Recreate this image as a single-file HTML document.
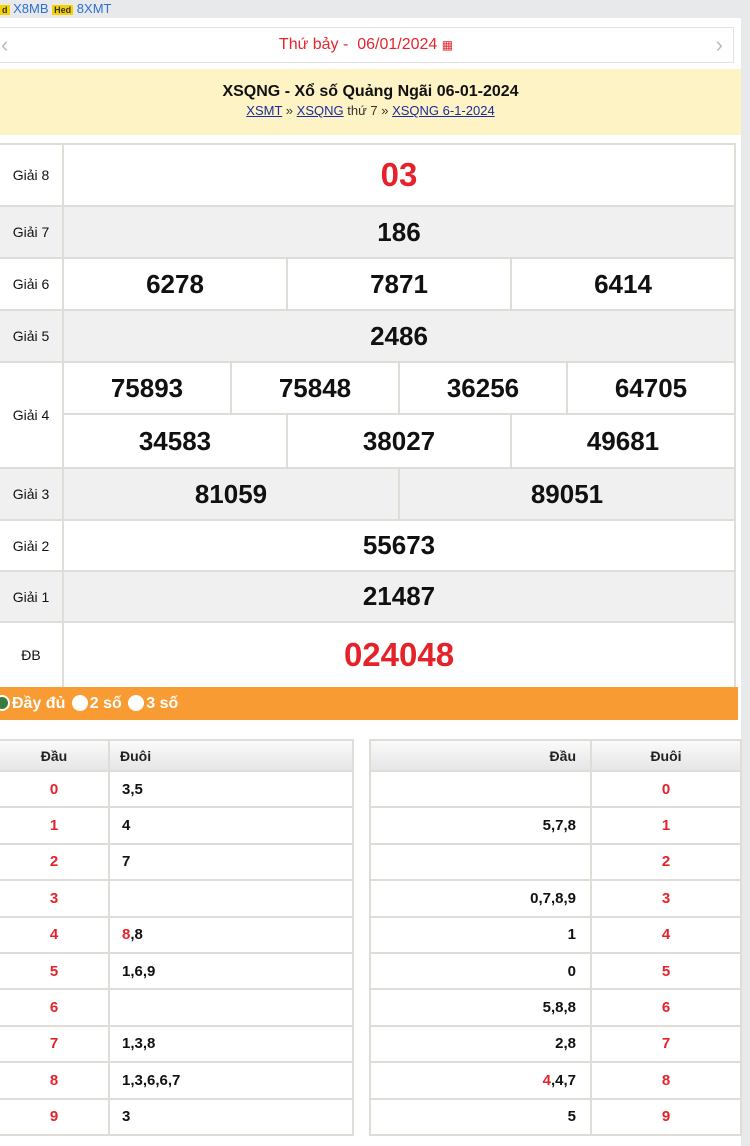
<!DOCTYPE html>
<html><head><meta charset="utf-8"><style>
*{box-sizing:border-box;margin:0;padding:0}
body{width:750px;height:1146px;background:#e8e9eb;font-family:"Liberation Sans",Arial,sans-serif;position:relative;overflow:hidden}
.top{position:absolute;left:0;top:0;height:18px;font-size:13px;color:#2e6fd8;line-height:18px}
.top b{background:#f6d000;color:#333;font-size:9px;padding:0 2px;font-weight:bold}
.date{position:absolute;left:-2px;top:27px;width:736px;height:36px;border:1px solid #e3e3e3;text-align:center;line-height:34px;color:#e5262e;font-size:16px}
.date .l,.date .rr{position:absolute;top:0;color:#bbb;font-size:22px}
.yel{position:absolute;left:0;top:69px;width:741px;height:66px;background:#fdf3c4;text-align:center}
.yel h1{font-size:16px;font-weight:bold;color:#111;margin-top:14px}
.yel p{font-size:13px;color:#333;margin-top:2px}
.yel a{color:#1b2c9c;text-decoration:underline}
table{border-collapse:collapse;position:absolute;table-layout:fixed}
.kq{left:-2px;top:143px;width:738px}
.kq td{border:2px solid #e0ddd8;text-align:center;font-weight:bold;font-size:26px;color:#111}
.kq td.lb{font-size:14px;font-weight:normal}
.g td{background:#f0f0f0}
.kq td.red{color:#e5222a;font-size:33px}
.orange{position:absolute;left:0;top:687px;width:738px;height:33px;background:#f99b33;color:#fff;font-weight:bold;font-size:16px;line-height:33px}
.dot{display:inline-block;width:16px;height:16px;border-radius:50%;background:#fff;vertical-align:-3px;margin:0 2px 0 2px}
.lt td{border:2px solid #e0ddd8;height:36.4px;font-size:15px;font-weight:bold;color:#111}
.lt th{border:2px solid #e0ddd8;height:31px;font-size:14px;background:linear-gradient(#fafafa,#e6e6e6);color:#222}
.lt .r{color:#e5222a}
</style></head><body>
<div class="top"><b>d</b> <span>X8MB</span> <b>Hed</b> <span>8XMT</span></div>
<div style="position:absolute;left:0;top:18px;width:741px;height:1128px;background:#fff"></div>
<div class="date"><span class="l" style="left:2px">‹</span>Thứ bảy -&nbsp; 06/01/2024 <span style="font-size:12px">▦</span><span class="rr" style="right:10px">›</span></div>
<div class="yel"><h1>XSQNG - Xổ số Quảng Ngãi 06-01-2024</h1><p><a>XSMT</a> » <a>XSQNG</a> thứ 7 » <a>XSQNG 6-1-2024</a></p></div>
<table class="kq">
<colgroup><col style="width:64px"><col><col><col><col><col><col><col><col><col><col><col><col></colgroup>
<tr style="height:62px"><td class="lb">Giải 8</td><td colspan="12" class="red">03</td></tr>
<tr class="g" style="height:52px"><td class="lb">Giải 7</td><td colspan="12">186</td></tr>
<tr style="height:52px"><td class="lb">Giải 6</td><td colspan="4">6278</td><td colspan="4">7871</td><td colspan="4">6414</td></tr>
<tr class="g" style="height:52px"><td class="lb">Giải 5</td><td colspan="12">2486</td></tr>
<tr style="height:52px"><td class="lb" rowspan="2">Giải 4</td><td colspan="3">75893</td><td colspan="3">75848</td><td colspan="3">36256</td><td colspan="3">64705</td></tr>
<tr style="height:54px"><td colspan="4">34583</td><td colspan="4">38027</td><td colspan="4">49681</td></tr>
<tr class="g" style="height:52px"><td class="lb">Giải 3</td><td colspan="6">81059</td><td colspan="6">89051</td></tr>
<tr style="height:51px"><td class="lb">Giải 2</td><td colspan="12">55673</td></tr>
<tr class="g" style="height:51px"><td class="lb">Giải 1</td><td colspan="12">21487</td></tr>
<tr style="height:66px"><td class="lb">ĐB</td><td colspan="12" class="red">024048</td></tr>
</table>
<div class="orange"><span class="dot" style="background:#3a7a3a;border:2px solid #fff;margin-left:-6px"></span>Đầy đủ <span class="dot"></span>2 số <span class="dot"></span>3 số</div>
<table class="lt" style="left:-2px;top:739px;width:356px">
<colgroup><col style="width:110px"><col></colgroup>
<tr><th>Đầu</th><th style="text-align:left;padding-left:10px">Đuôi</th></tr>
<tr><td class="r" style="text-align:center">0</td><td style="padding-left:12px">3,5</td></tr>
<tr><td class="r" style="text-align:center">1</td><td style="padding-left:12px">4</td></tr>
<tr><td class="r" style="text-align:center">2</td><td style="padding-left:12px">7</td></tr>
<tr><td class="r" style="text-align:center">3</td><td style="padding-left:12px"></td></tr>
<tr><td class="r" style="text-align:center">4</td><td style="padding-left:12px"><span style="color:#e5222a">8</span>,8</td></tr>
<tr><td class="r" style="text-align:center">5</td><td style="padding-left:12px">1,6,9</td></tr>
<tr><td class="r" style="text-align:center">6</td><td style="padding-left:12px"></td></tr>
<tr><td class="r" style="text-align:center">7</td><td style="padding-left:12px">1,3,8</td></tr>
<tr><td class="r" style="text-align:center">8</td><td style="padding-left:12px">1,3,6,6,7</td></tr>
<tr><td class="r" style="text-align:center">9</td><td style="padding-left:12px">3</td></tr>
</table>
<table class="lt" style="left:369px;top:739px;width:373px">
<colgroup><col><col style="width:150px"></colgroup>
<tr><th style="text-align:right;padding-right:14px">Đầu</th><th>Đuôi</th></tr>
<tr><td style="text-align:right;padding-right:14px"></td><td class="r" style="text-align:center">0</td></tr>
<tr><td style="text-align:right;padding-right:14px">5,7,8</td><td class="r" style="text-align:center">1</td></tr>
<tr><td style="text-align:right;padding-right:14px"></td><td class="r" style="text-align:center">2</td></tr>
<tr><td style="text-align:right;padding-right:14px">0,7,8,9</td><td class="r" style="text-align:center">3</td></tr>
<tr><td style="text-align:right;padding-right:14px">1</td><td class="r" style="text-align:center">4</td></tr>
<tr><td style="text-align:right;padding-right:14px">0</td><td class="r" style="text-align:center">5</td></tr>
<tr><td style="text-align:right;padding-right:14px">5,8,8</td><td class="r" style="text-align:center">6</td></tr>
<tr><td style="text-align:right;padding-right:14px">2,8</td><td class="r" style="text-align:center">7</td></tr>
<tr><td style="text-align:right;padding-right:14px"><span style="color:#e5222a">4</span>,4,7</td><td class="r" style="text-align:center">8</td></tr>
<tr><td style="text-align:right;padding-right:14px">5</td><td class="r" style="text-align:center">9</td></tr>
</table>
</body></html>
